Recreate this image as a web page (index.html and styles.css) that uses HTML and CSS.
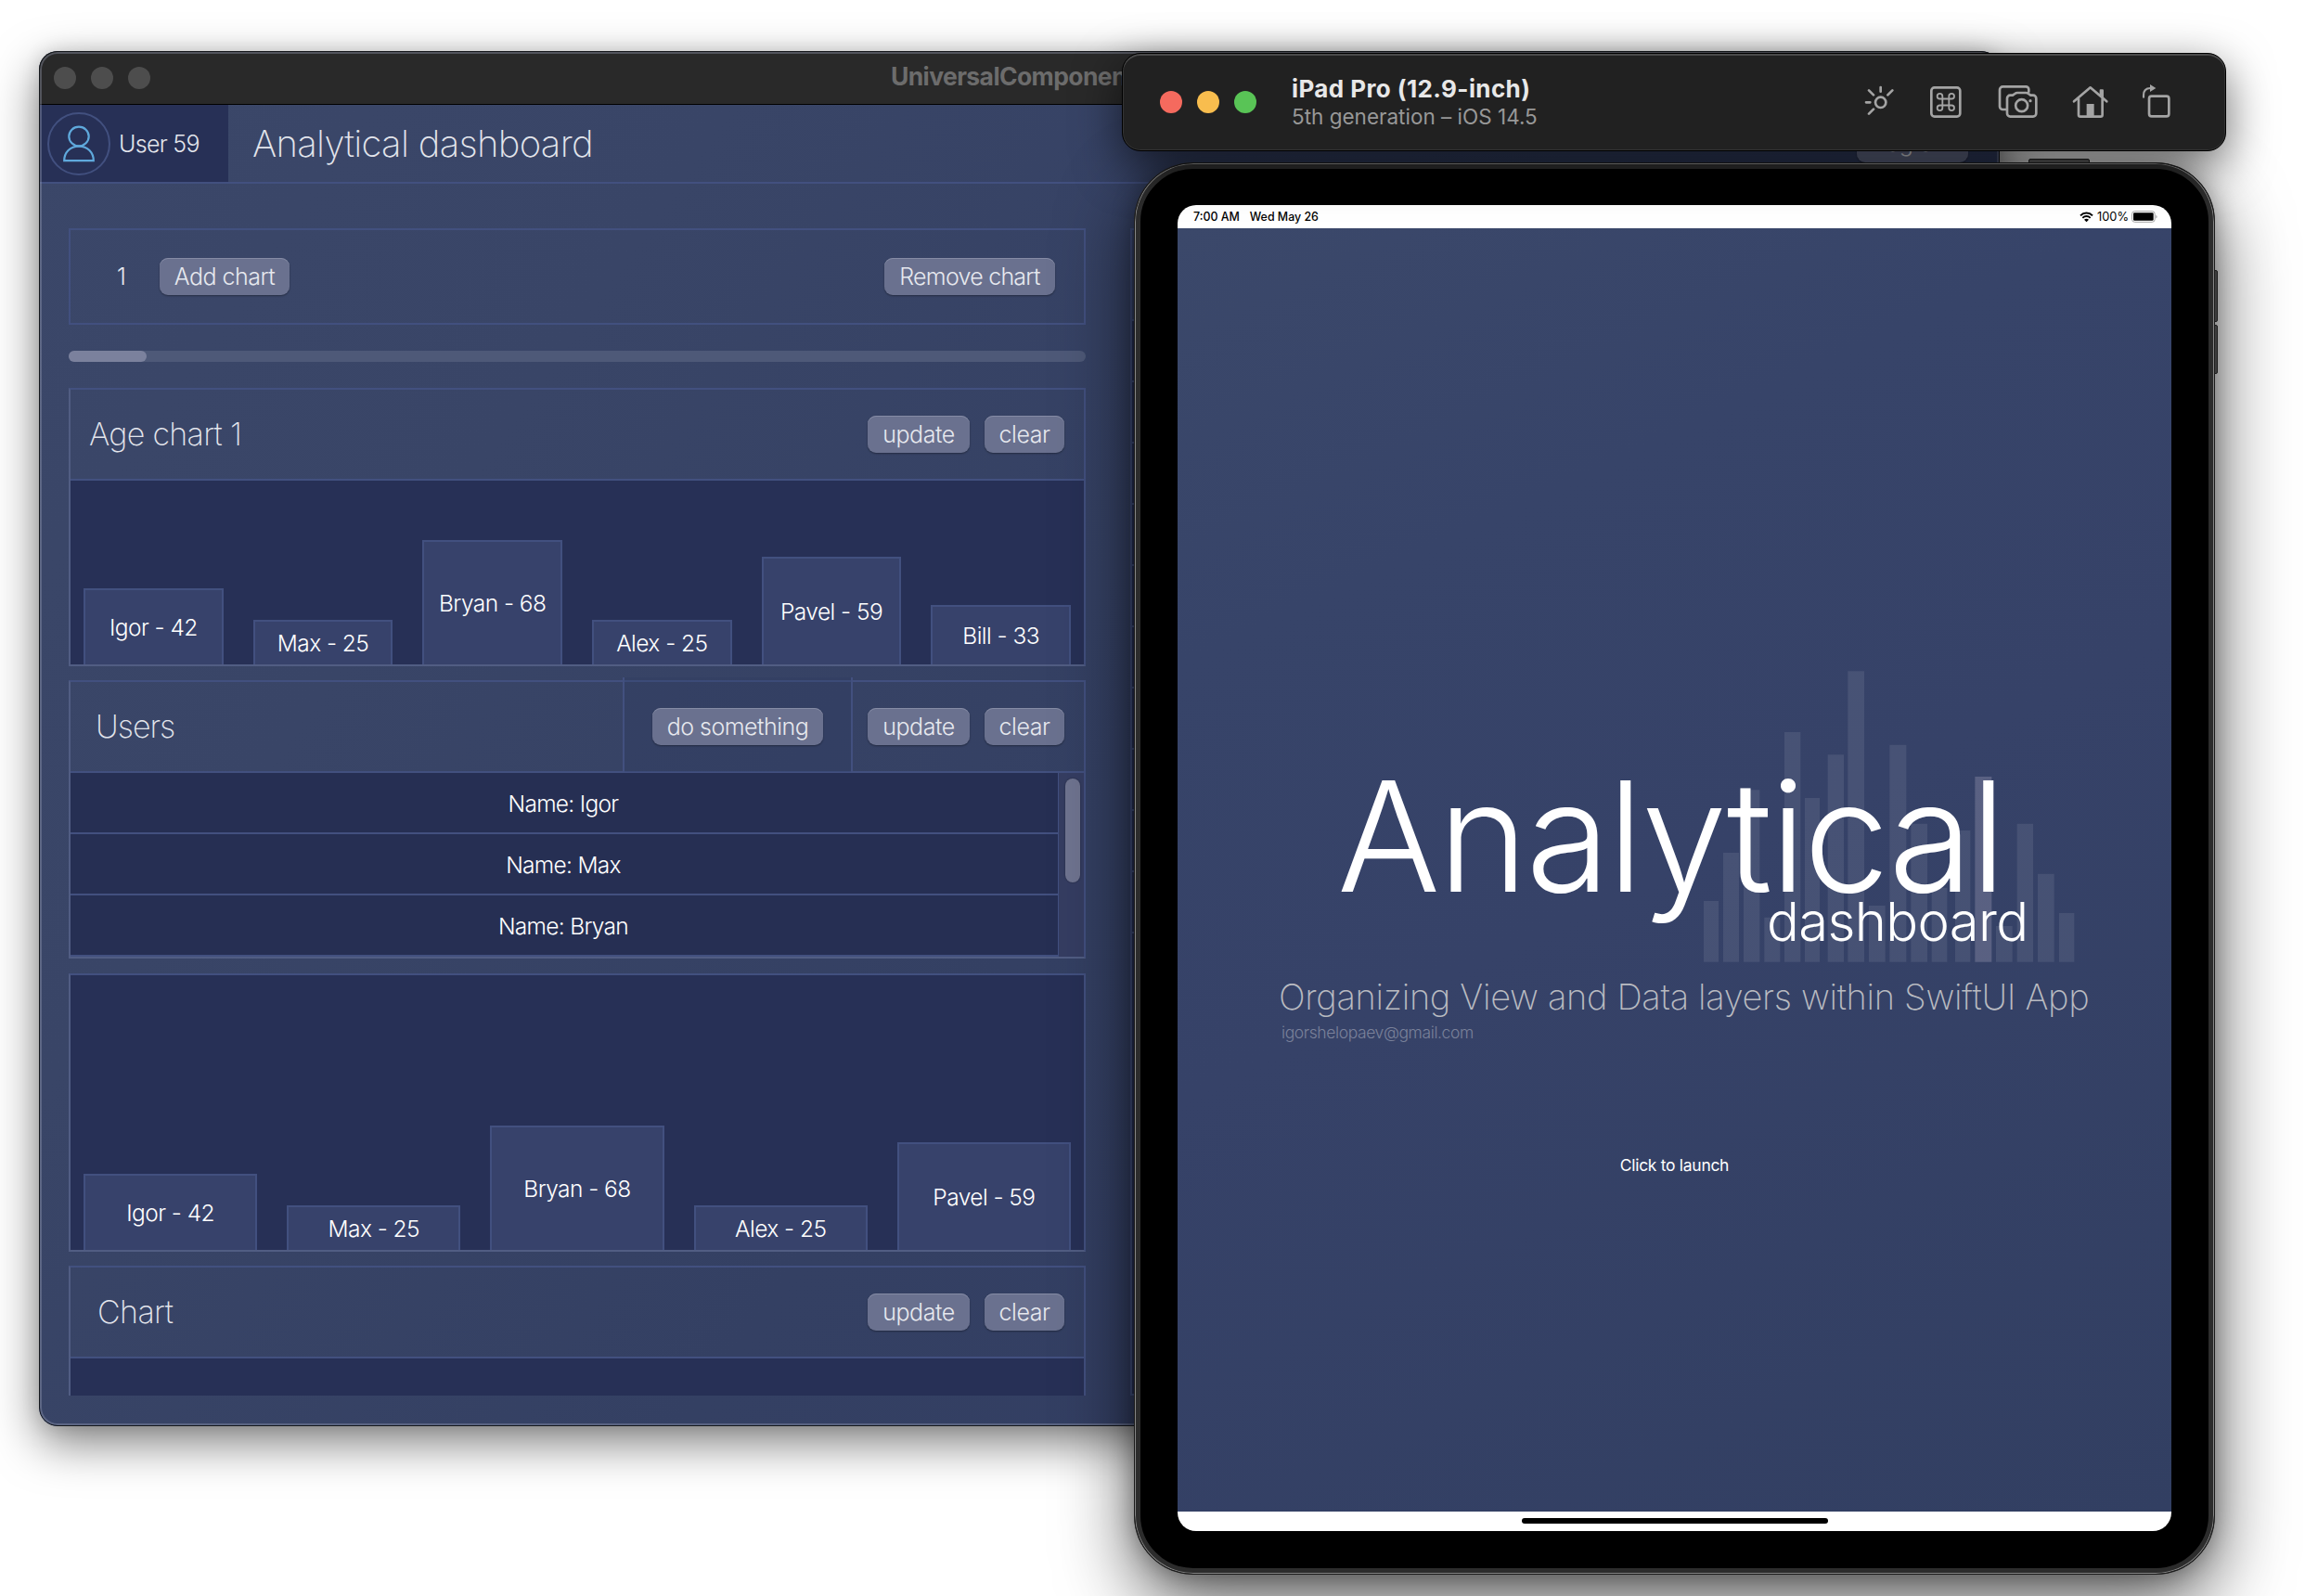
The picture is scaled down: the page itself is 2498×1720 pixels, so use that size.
FILE: index.html
```html
<!DOCTYPE html>
<html lang="en">
<head>
<meta charset="utf-8">
<title>Analytical dashboard</title>
<link rel="stylesheet" href="styles.css">
</head>
<body>
<main class="desktop">

  <section class="window">
    <header class="titlebar">
      <div class="lights"><i></i><i></i><i></i></div>
      <h1 class="titlebar-name">UniversalComponents</h1>
    </header>

    <div class="appbar">
      <div class="user">
        <svg class="avatar" viewBox="0 0 68 68">
          <circle class="avatar-ring" cx="34" cy="34" r="33"/>
          <ellipse class="avatar-line" cx="34" cy="26" rx="10.7" ry="10.3"/>
          <path class="avatar-line" d="M18.2 52.2c0-9 6.500-15.500 15.800-15.500s15.800 6.500 15.800 15.500z"/>
        </svg>
        <span class="user-name">User 59</span>
      </div>
      <h2 class="appbar-title">Analytical dashboard</h2>
      <button class="btn logout">Log out</button>
    </div>

    <div class="columns">
      <div class="column">
        <div class="toolbox">
          <span class="count">1</span>
          <button class="btn add">Add chart</button>
          <button class="btn remove">Remove chart</button>
        </div>
        <div class="progress"><div class="progress-fill"></div></div>

        <article class="card">
          <header class="card-head">
            <h3 class="title-age">Age chart 1</h3>
            <div class="actions"><button class="btn update">update</button><button class="btn clear">clear</button></div>
          </header>
          <div class="chart">
            <div class="bar" style="height:82px">Igor - 42</div>
            <div class="bar" style="height:48px">Max - 25</div>
            <div class="bar" style="height:134px">Bryan - 68</div>
            <div class="bar" style="height:48px">Alex - 25</div>
            <div class="bar" style="height:116px">Pavel - 59</div>
            <div class="bar" style="height:64px">Bill - 33</div>
          </div>
        </article>

        <article class="card card-users">
          <header class="card-head">
            <h3 class="title-users">Users</h3>
            <div class="actions extra"><button class="btn something">do something</button></div>
            <div class="actions last"><button class="btn update">update</button><button class="btn clear">clear</button></div>
          </header>
          <div class="list">
            <ul class="rows">
              <li>Name: Igor</li>
              <li>Name: Max</li>
              <li>Name: Bryan</li>
            </ul>
            <div class="track"><div class="thumb"></div></div>
          </div>
        </article>

        <article class="card">
          <div class="chart">
            <div class="bar" style="height:82px">Igor - 42</div>
            <div class="bar" style="height:48px">Max - 25</div>
            <div class="bar" style="height:134px">Bryan - 68</div>
            <div class="bar" style="height:48px">Alex - 25</div>
            <div class="bar" style="height:116px">Pavel - 59</div>
          </div>
        </article>

        <article class="card">
          <header class="card-head">
            <h3 class="title-chart">Chart</h3>
            <div class="actions"><button class="btn update">update</button><button class="btn clear">clear</button></div>
          </header>
          <div class="chart"></div>
        </article>
      </div>

      <div class="column side">
        <div class="side-head"></div>
        <div class="side-row"></div><div class="side-row"></div><div class="side-row"></div>
        <div class="side-row"></div><div class="side-row"></div><div class="side-row"></div>
        <div class="side-row"></div><div class="side-row"></div><div class="side-row"></div>
        <div class="side-row"></div><div class="side-row side-rest"></div>
      </div>
    </div>
  </section>

  <section class="device">
    <i class="key key-top"></i>
    <i class="key key-up"></i>
    <i class="key key-down"></i>
    <div class="screen">
      <div class="status">
        <span class="time">7:00 AM</span>
        <span class="date">Wed May 26</span>
        <svg class="wifi" viewBox="0 0 45 36">
          <path d="M3 13C14 2 31 2 42 13M10 20.500c7-7 18-7 25 0" fill="none" stroke="#000" stroke-width="6"/>
          <path d="M22.500 34l-7.500-8c4-4 11-4 15 0z"/>
        </svg>
        <span class="pct">100%</span>
        <svg class="battery" viewBox="0 0 84 38">
          <rect x="1.500" y="1.500" width="74" height="35" rx="9" fill="none" stroke="#a6a6a6" stroke-width="3"/>
          <rect x="6" y="6" width="65" height="26" rx="4"/>
          <path d="M79 14c5 2 5 9 0 11z" fill="#a6a6a6"/>
        </svg>
      </div>
      <div class="splash">
        <div class="logo">
          <svg class="logo-bars" viewBox="0 0 1290 1020">
            <path d="M33 783h48v197h-48zM96 627h51v353h-51zM162 424h52v556h-52zM229 836h51v144h-51zM294 237h52v743h-52zM360 450h48v530h-48zM434 310h52v670h-52zM499 40h53v940h-53zM567 798h53v182h-53zM634 278h54v702h-54zM703 533h53v447h-53zM770 740h50v240h-50zM846 555h49v425h-49zM978 864h53v116h-53zM1046 533h52v447h-52zM1113 695h53v285h-53zM1182 822h49v158h-49z"/>
            <path class="hot" d="M910 381h54v599h-54z"/>
          </svg>
          <div class="logo-main">Analytical</div>
          <div class="logo-sub">dashboard</div>
        </div>
        <p class="tagline">Organizing View and Data layers within SwiftUI App</p>
        <p class="email">igorshelopaev@gmail.com</p>
        <p class="launch">Click to launch</p>
      </div>
      <div class="home"><i></i></div>
    </div>
  </section>

  <section class="simbar">
    <div class="lights color"><i></i><i></i><i></i></div>
    <div class="sim-text">
      <strong>iPad Pro (12.9-inch)</strong>
      <em>5th generation – iOS 14.5</em>
    </div>
    <div class="sim-icons">
      <svg class="ic-light" viewBox="28 150 98 114"><circle cx="81" cy="211" r="17"/><path d="M81 162v14M104 187l15-15M58 187l-15-15M34 211h13M43 248l15-15"/></svg>
      <svg class="ic-command" viewBox="238 150 106 114"><rect x="245" y="163" width="93" height="94" rx="10"/><path class="thin" d="M281 191v38a8.500 8.500 0 1 1-8.500-8.500h38a8.500 8.500 0 1 1-8.500 8.500v-38a8.500 8.500 0 1 1 8.500 8.500h-38a8.500 8.500 0 1 1 8.500-8.500z"/></svg>
      <svg class="ic-camera" viewBox="460 150 130 114"><path d="M486 234h-10a10 10 0 0 1-10-10v-54a10 10 0 0 1 10-10h75a9 9 0 0 1 9 9v7M500 188h8l7-5q4-3 8-3h28q4 0 8 3l7 5h8a10 10 0 0 1 10 10v49a10 10 0 0 1-10 10h-74a10 10 0 0 1-10-10v-49a10 10 0 0 1 10-10z"/><circle cx="537" cy="221" r="19.500"/><circle class="solid" cx="565" cy="206" r="5"/></svg>
      <svg class="ic-home" viewBox="700 150 118 114"><path d="M706 208l53-45 53 45M721 200v51q0 6 6 6h65q6 0 6-6v-51"/><path class="solid" d="M747 216h24v42h-24zM789 172q0-3 3-3h7q3 0 3 3v25l-13-11z"/></svg>
      <svg class="ic-rotate" viewBox="925 150 95 114"><rect x="949" y="191" width="64" height="65" rx="8"/><path class="mid" d="M931 194v-6c0-15 8-23 22-23"/><path class="solid" d="M952 153l19 12-19 12z"/></svg>
    </div>
  </section>
</main>
</body>
</html>
```
FILE: styles.css
```css
* { box-sizing: border-box; }

body {
  margin: 0;
  background: #fff;
  font-family: Inter, "Liberation Sans", sans-serif;
  font-weight: 300;
  overflow: hidden;
}

h1, h2, h3, p, ul { margin: 0; padding: 0; font-weight: inherit; }
ul { list-style: none; }

.desktop {
  position: relative;
  width: 2498px;
  height: 1720px;
  overflow: hidden;
}

/* Dashboard window */
.window {
  position: absolute;
  left: 42px;
  top: 55px;
  width: 2113px;
  height: 1482px;
  display: flex;
  flex-direction: column;
  border-radius: 20px;
  overflow: hidden;
  background: linear-gradient(125deg, #3b4769 0%, #394567 25%, #344063 55%, #313c62 100%);
}
.window::after {
  content: "";
  position: absolute;
  inset: 0;
  border-radius: 20px;
  border: 1px solid #15181c;
  box-shadow: inset 0 0 0 2px rgba(160, 165, 190, .35);
}
.desktop::before {
  content: "";
  position: absolute;
  left: 42px;
  top: 55px;
  width: 2113px;
  height: 1482px;
  border-radius: 20px;
  box-shadow: 0 18px 50px rgba(0, 0, 0, .5), 0 0 20px rgba(0, 0, 0, .12);
}

.titlebar {
  position: relative;
  flex: none;
  height: 58px;
  padding-left: 16px;
  display: flex;
  align-items: center;
  background: #292929;
  border-bottom: 1px solid #000;
}
.lights { display: flex; gap: 16px; }
.lights i { width: 24px; height: 24px; border-radius: 50%; background: #4d4d4d; }
.titlebar-name {
  position: absolute;
  inset: 0;
  text-align: center;
  font-size: 26.500px;
  line-height: 55px;
  font-weight: 700;
  letter-spacing: -.6px;
  color: #6c6c6c;
}

.appbar {
  flex: none;
  height: 85px;
  display: flex;
  align-items: center;
  border-bottom: 2px solid #42507f;
}
.user {
  width: 204px;
  height: 83px;
  padding-left: 9px;
  display: flex;
  align-items: center;
  gap: 9px;
  background: #273056;
}
.avatar { width: 68px; height: 68px; fill: none; }
.avatar-ring { stroke: #42507f; stroke-width: 2; }
.avatar-line { stroke: #5fa9dc; stroke-width: 2.2; }
.user-name { font-size: 25px; letter-spacing: -.7px; color: #e3e5ec; }
.appbar-title { flex: 1; padding-left: 26px; font-size: 40px; font-weight: 250; letter-spacing: -.7px; color: #e3e5ec; }

.btn {
  height: 40px;
  padding: 0;
  border: 0;
  border-radius: 9px;
  background: #6a718f;
  box-shadow: inset 0 1px 0 #858ba5, 0 1px 2px rgba(0, 0, 0, .35);
  font: 300 25px/38px Inter, "Liberation Sans", sans-serif;
  letter-spacing: -.5px;
  text-align: center;
  color: #e6e8ee;
  white-space: nowrap;
}
.update { width: 110px; }
.clear { width: 86px; }
.add { width: 140px; }
.remove { width: 184px; margin-left: auto; letter-spacing: -.75px; }
.something { width: 184px; }
.logout { width: 120px; margin-right: 34px; padding-bottom: 5px; }

.columns {
  display: flex;
  gap: 48px;
  height: 1306px;
  padding: 48px 32px 0;
  overflow: hidden;
}
.column { flex: 0 0 1096px; }

.toolbox {
  height: 104px;
  padding: 0 31px 0 50px;
  display: flex;
  align-items: center;
  border: 2px solid #42507f;
}
.count { width: 46px; font-size: 25px; color: #e6e8ee; }

.progress { height: 12px; margin: 28px 0; border-radius: 6px; background: #4e5978; }
.progress-fill { width: 84px; height: 12px; border-radius: 6px; background: #7b819d; }

.card {
  display: flex;
  flex-direction: column;
  height: 300px;
  margin-bottom: 15px;
  border: 2px solid #42507f;
  border-left-color: #515d83;
  border-bottom-color: #515d83;
}
.card-users { margin-bottom: 16px; }
.card-head {
  flex: none;
  height: 98px;
  display: flex;
  align-items: center;
  border-bottom: 2px solid #42507f;
}
.card-head h3 { flex: 1; padding: 0 0 2px 28px; font-size: 34px; font-weight: 250; color: #e3e5ec; }
.card-head .title-age { padding-left: 20px; letter-spacing: -.7px; }
.card-head .title-users { padding-left: 27px; letter-spacing: -1px; }
.card-head .title-chart { padding-left: 29px; letter-spacing: -.6px; }
.actions { display: flex; align-items: center; gap: 16px; padding-right: 21px; }
.card-users .actions { height: 102px; margin-top: -4px; padding: 4px 21px 0 16px; border-left: 2px solid #42507f; }
.card-users .extra { padding: 4px 30px 0; background: rgba(40, 55, 95, .2); }

.chart {
  flex: 1;
  display: flex;
  align-items: flex-end;
  gap: 32px;
  padding: 0 14px;
  background: #273056;
}
.bar {
  flex: 1;
  display: flex;
  align-items: center;
  justify-content: center;
  border: 2px solid #42507f;
  border-bottom: 0;
  background: #37426b;
  font-size: 24.500px;
  letter-spacing: -.55px;
  white-space: nowrap;
  color: #fff;
}

.list { flex: 1; display: flex; background: #353d62; }
.rows { flex: 1; background: #262f53; }
.rows li {
  height: 66px;
  padding-right: 2px;
  border-bottom: 2px solid #42507f;
  text-align: center;
  font-size: 24.500px;
  line-height: 66px;
  letter-spacing: -.7px;
  color: #fff;
}
.track { width: 28px; padding: 6px 4px 0 7px; border-left: 1px solid #42507f; }
.thumb { width: 16px; height: 112px; border-radius: 8px; background: #6f7490; box-shadow: 0 0 2px rgba(0, 0, 0, .4); }

.side { flex: 0 0 905px; height: 1258px; border: 2px solid #42507f; border-top: 0; background: #273056; }
.side-head { height: 100px; border: solid #42507f; border-width: 2px 0; background: #354166; }
.side-row { height: 66px; border-bottom: 2px solid #42507f; }
.side-rest { border: 0; }

/* Simulated tablet */
.device {
  position: absolute;
  left: 1222px;
  top: 175px;
  width: 1165px;
  height: 1522px;
  padding: 39px 40px 0;
  border: 7px solid #2c2c2c;
  border-radius: 64px;
  background: #000;
  box-shadow: 0 30px 80px rgba(0, 0, 0, .65), 0 0 24px rgba(0, 0, 0, .3);
}
.device::before {
  content: "";
  position: absolute;
  inset: -7px;
  border: 1px solid #1a1a1a;
  border-radius: 64px;
  box-shadow: inset 0 0 0 1px #858585;
}
.key { position: absolute; background: #3e3e3e; border: 1px solid #1c1c1c; }
.key-top { left: 957px; top: -11px; width: 66px; height: 5px; border-radius: 2px 2px 0 0; background: #505050; }
.key-up { left: 1157px; top: 109px; width: 4px; height: 56px; border-radius: 0 2px 2px 0; }
.key-down { left: 1157px; top: 168px; width: 4px; height: 53px; border-radius: 0 2px 2px 0; }

.screen {
  display: flex;
  flex-direction: column;
  width: 1071px;
  height: 1429px;
  border-radius: 20px;
  overflow: hidden;
  background: #fff;
}
.status {
  flex: none;
  height: 25px;
  padding: 0 15px 0 17px;
  display: flex;
  align-items: center;
  font-size: 12.400px;
  font-weight: 500;
  color: #000;
}
.date { margin-left: 11px; }
.wifi { width: 15px; height: 12px; margin-left: auto; }
.pct { margin: 0 3px 0 4px; font-size: 12.800px; font-weight: 400; }
.battery { width: 28px; height: 13px; }

.splash {
  height: 1383px;
  background: linear-gradient(155deg, #3b486a 0%, #374469 25%, #364268 50%, #323f62 100%);
  color: #fff;
}
.logo { position: relative; padding-top: 575px; }
.logo-bars { position: absolute; left: 556px; top: 464px; width: 430px; height: 340px; fill: rgba(255, 255, 255, .085); }
.logo-bars .hot { fill: rgba(255, 240, 255, .18); }
.logo-main, .logo-sub { position: relative; white-space: nowrap; }
.logo-main { padding-left: 172px; font-size: 165px; line-height: 160px; letter-spacing: -2.400px; }
.logo-sub { margin-top: -17px; padding-left: 635px; font-size: 58px; line-height: 58px; letter-spacing: -.65px; }
.tagline { margin-top: 29px; padding-left: 109px; font-size: 38px; line-height: 46px; font-weight: 250; letter-spacing: -.33px; color: #b9bbc1; white-space: nowrap; }
.email { margin-top: 3px; padding-left: 112px; font-size: 17.500px; line-height: 26px; letter-spacing: -.4px; color: #7a819a; }
.launch { margin-top: 118px; text-align: center; font-size: 17.500px; line-height: 24px; font-weight: 400; letter-spacing: -.3px; }

.home { flex: 1; display: flex; align-items: center; justify-content: center; padding-bottom: 1px; }
.home i { width: 330px; height: 6px; border-radius: 3px; background: #000; }

/* Simulator control strip */
.simbar {
  position: absolute;
  left: 1209px;
  top: 57px;
  width: 1190px;
  height: 106px;
  padding: 0 58px 0 40px;
  display: flex;
  align-items: center;
  border: 1px solid #000;
  border-radius: 20px;
  background: #212121;
  box-shadow: inset 0 2px 0 #4a4a4a, inset 0 0 0 1px #333, 0 16px 50px rgba(0, 0, 0, .6);
}
.color i:nth-child(1) { background: #f56a5e; }
.color i:nth-child(2) { background: #f8bd4e; }
.color i:nth-child(3) { background: #59c456; }
.sim-text { flex: 1; margin-left: 38px; }
.sim-text strong { display: block; font-size: 26px; line-height: 32px; font-weight: 700; letter-spacing: .4px; color: #e8e8e8; }
.sim-text em { display: block; font-size: 22.500px; line-height: 28px; font-style: normal; font-weight: 400; color: #989898; }
.sim-icons { display: flex; margin-top: -2px; }
.sim-icons svg { height: 38px; fill: none; stroke: #a4a4a4; stroke-width: 8; stroke-linecap: round; stroke-linejoin: round; }
.sim-icons .ic-light { width: 32.700px; }
.sim-icons .ic-command { width: 35.300px; margin-left: 37.300px; }
.sim-icons .ic-camera { width: 43.300px; margin-left: 38.700px; }
.sim-icons .ic-home { width: 39.300px; margin-left: 36.700px; }
.sim-icons .ic-rotate { width: 31.700px; margin-left: 35.700px; }
.sim-icons .thin { stroke-width: 5.500; }
.sim-icons .mid { stroke-width: 6.500; }
.sim-icons .solid { fill: #a4a4a4; stroke: none; }
```
